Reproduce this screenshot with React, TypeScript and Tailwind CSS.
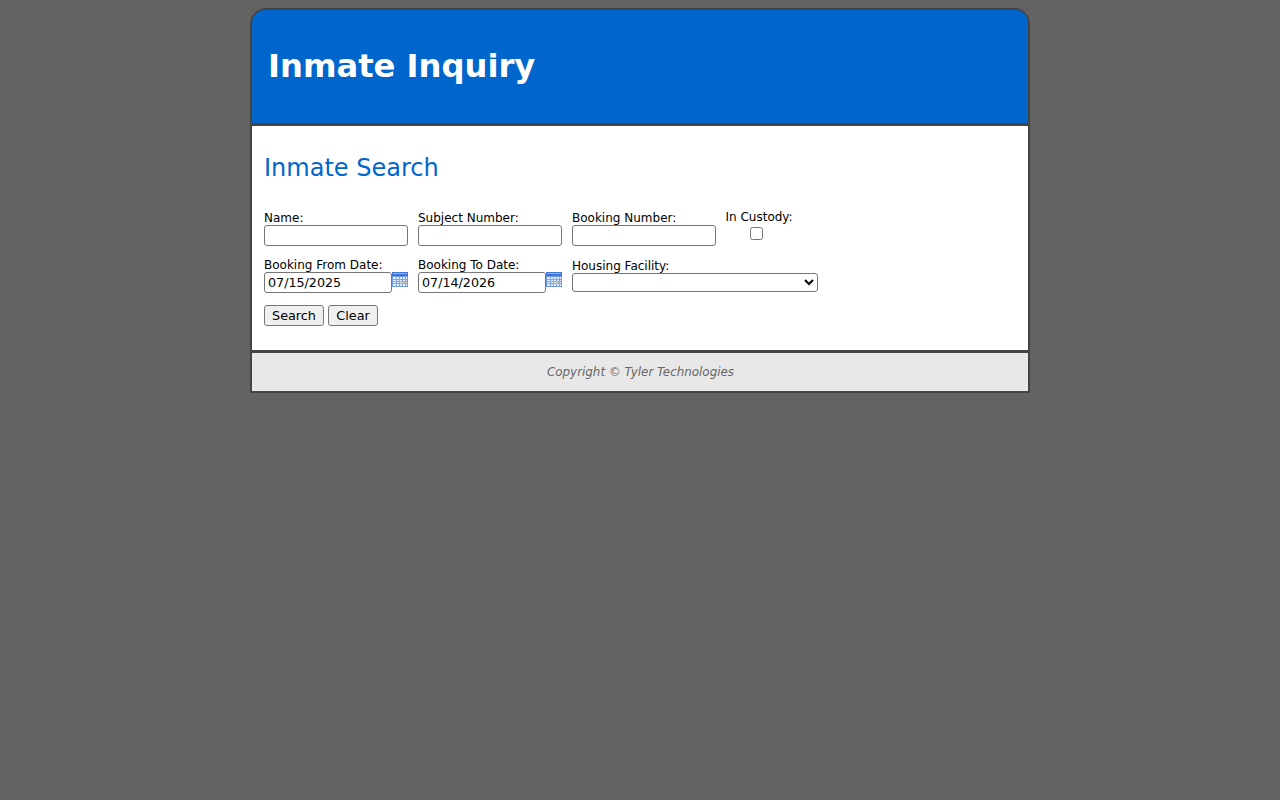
const inputClass = 'h-[21px] border border-[#767676] rounded-[3px] bg-white px-[3px] text-[12.7px] text-black';
const buttonClass = 'h-[21px] border border-[#767676] rounded-[3px] bg-[#efefef] text-[12.8px] text-black';

const CalendarIcon = () => (
  <svg width="16" height="16" viewBox="0 0 16 16" className="block shrink-0">
    <rect x="0" y="0" width="16" height="15" fill="#6f9ae6" />
    <rect x="0" y="0" width="16" height="4" fill="#3f74d4" />
    <rect x="1" y="1" width="14" height="1" fill="#8db4f2" />
    <rect x="1" y="5" width="14" height="9" fill="#e4eefc" />
    {[4, 7, 10, 13].map((x) => (
      <rect key={x} x={x} y="5" width="1" height="9" fill="#7ea8ee" />
    ))}
    {[7, 9, 11].map((y) => (
      <rect key={y} x="1" y={y} width="14" height="1" fill="#7ea8ee" />
    ))}
    <rect x="10" y="9" width="3" height="3" fill="#bdb7a8" />
  </svg>
);

const TextField = ({ label }: { label: string }) => (
  <div className="flex w-[144px] flex-col">
    <label className="text-xs leading-[14px] text-black">{label}</label>
    <input type="text" className={`${inputClass} w-[144px]`} />
  </div>
);

const DateField = ({ label, value }: { label: string; value: string }) => (
  <div className="flex w-[144px] flex-col">
    <label className="text-xs leading-[14px] text-black">{label}</label>
    <div className="flex items-start">
      <input type="text" defaultValue={value} className={`${inputClass} w-[128px]`} />
      <CalendarIcon />
    </div>
  </div>
);

export default function App() {
  return (
    <div className="min-h-screen bg-[#636363] pt-2 font-['DejaVu_Sans',sans-serif]">
      <div className="mx-auto w-[780px] rounded-t-2xl border-2 border-[#444444] bg-[#444444]">
        <header className="flex h-[113px] items-center rounded-t-[13px] bg-[#0066cc] px-4">
          <h1 className="text-[32.2px] font-bold text-white">Inmate Inquiry</h1>
        </header>
        <main className="h-[230px] border-t-[3px] border-b-[3px] border-[#444444] bg-white px-3 pt-[28px]">
          <h2 className="text-2xl leading-[28px] text-[#0066cc]">Inmate Search</h2>
          <div className="mt-[29px] flex gap-[10px]">
            <TextField label="Name:" />
            <TextField label="Subject Number:" />
            <TextField label="Booking Number:" />
            <div className="-mt-px flex flex-col">
              <label className="-ml-[0.5px] text-xs leading-[14px] text-black">In Custody:</label>
              <input type="checkbox" className="mt-[3px] ml-6 h-[13px] w-[13px]" />
            </div>
          </div>
          <div className="mt-[12px] flex gap-[10px]">
            <DateField label="Booking From Date:" value="07/15/2025" />
            <DateField label="Booking To Date:" value="07/14/2026" />
            <div className="flex flex-col pt-px">
              <label className="text-xs leading-[14px] text-black">Housing Facility:</label>
              <select className="h-[19px] w-[246px] rounded-[3px] border border-[#767676] bg-white text-[12.8px] text-black" />
            </div>
          </div>
          <div className="mt-3 flex gap-1">
            <button className={`${buttonClass} w-[60px]`}>Search</button>
            <button className={`${buttonClass} w-[50px]`}>Clear</button>
          </div>
        </main>
        <footer className="flex h-[38px] items-center justify-center bg-[#e8e8e8] pt-[2px] pl-px text-[11.9px] text-[#666666] italic">
          Copyright © Tyler Technologies
        </footer>
      </div>
    </div>
  );
}
